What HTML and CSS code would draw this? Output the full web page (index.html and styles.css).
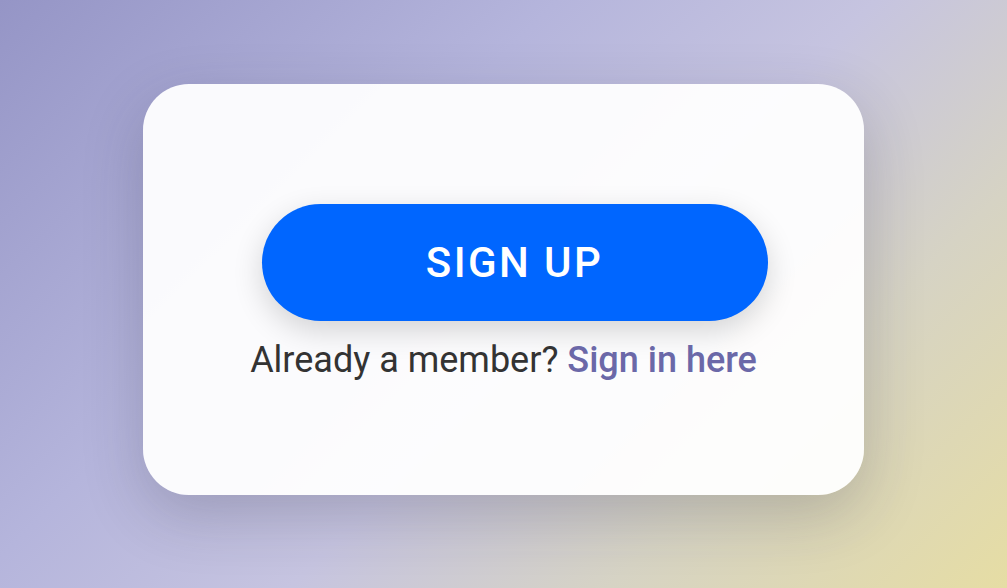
FILE: index.html
```html
<!DOCTYPE html>
<html lang="en">
<head>
<meta charset="utf-8">
<title>Sign up</title>
<link rel="stylesheet" href="styles.css">
</head>
<body>
<main class="page">
  <section class="card">
    <button class="signup-btn" type="button">SIGN UP</button>
    <p class="member">Already a member? <a class="signin" href="#">Sign in here</a></p>
  </section>
</main>
</body>
</html>
```
FILE: styles.css
```css
html, body {
  margin: 0;
  padding: 0;
  height: 100%;
}
body {
  font-family: Roboto, "Liberation Sans", sans-serif;
  background: linear-gradient(135deg, #9595c6 0%, #b5b5dc 35%, #c6c4e0 55%, #d6d3c4 75%, #e6dda4 100%);
  overflow: hidden;
}
.page {
  height: 100%;
  box-sizing: border-box;
  display: flex;
  align-items: center;
  justify-content: center;
  padding-bottom: 9px;
}
.card {
  width: 721px;
  height: 411px;
  box-sizing: border-box;
  border-radius: 46px;
  background: rgba(255, 255, 255, 0.94);
  box-shadow: 0 20px 60px rgba(40, 40, 60, 0.22);
  display: flex;
  flex-direction: column;
  align-items: center;
  justify-content: flex-start;
  padding-top: 120px;
}
.signup-btn {
  width: 506px;
  height: 117px;
  margin-left: 22px;
  border: none;
  border-radius: 59px;
  background: #0066ff;
  color: #fff;
  font-family: Roboto, "Liberation Sans", sans-serif;
  font-size: 42px;
  font-weight: 500;
  letter-spacing: 2.4px;
  box-shadow: 0 10px 30px rgba(0, 0, 0, 0.16);
  cursor: pointer;
}
.member {
  margin: 17px 0 0;
  font-size: 36px;
  line-height: 44px;
  color: #333;
}
.signin {
  color: #6b68a8;
  font-weight: 500;
  text-decoration: none;
}
```
